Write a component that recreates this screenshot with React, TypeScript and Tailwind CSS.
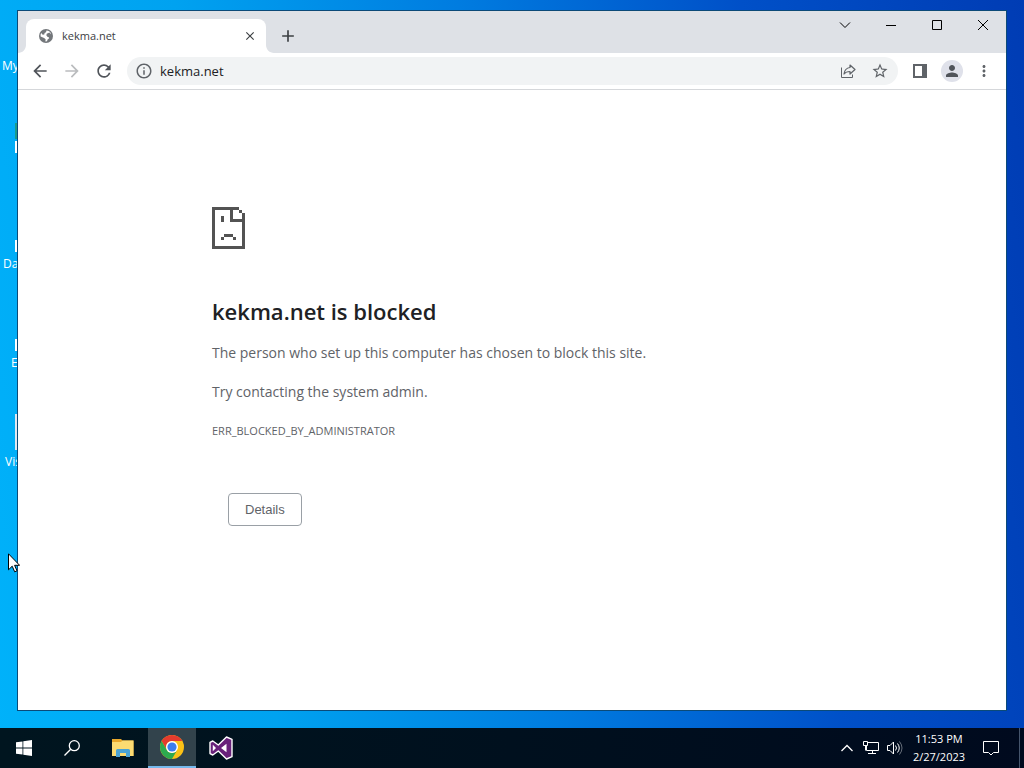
import type { ReactNode } from 'react';
import {
  MdAdd,
  MdArrowBack,
  MdArrowForward,
  MdClose,
  MdInfoOutline,
  MdMoreVert,
  MdPerson,
  MdRefresh,
  MdStarBorder,
} from 'react-icons/md';

const shortcuts = [
  { label: 'My', place: 'top-[57px] left-0.5' },
  { label: 'Da', place: 'top-[255px] left-[3px]' },
  { label: 'E', place: 'top-[354px] left-[11px]' },
  { label: 'Vis', place: 'top-[453px] left-[5px]' },
];

const shortcutEdges = [
  'top-[123px] h-4 bg-[#1a9b8a]',
  'top-[141px] h-3 bg-white',
  'top-[240px] h-3 bg-white',
  'top-[339px] h-3 bg-white',
  'top-[414px] h-9 bg-slate-200',
];

function IconButton({ label, className = '', children }: { label: string; className?: string; children: ReactNode }) {
  return (
    <button type="button" aria-label={label} className={`flex shrink-0 items-center justify-center ${className}`}>
      {children}
    </button>
  );
}

function TitleBar() {
  return (
    <div className="flex h-[42px] items-end bg-[#dee1e6] pl-2">
      <div className="relative flex h-[34px] w-60 items-center rounded-t-lg bg-white pl-3 pr-2 text-[#3c4043]">
        <svg className="absolute bottom-0 -left-2 h-2 w-2" viewBox="0 0 8 8" fill="white">
          <path d="M8 0v8H0c4.400 0 8-3.600 8-8z" />
        </svg>
        <svg className="absolute bottom-0 -right-2 h-2 w-2" viewBox="0 0 8 8" fill="white">
          <path d="M0 0v8h8c-4.400 0-8-3.600-8-8z" />
        </svg>
        <svg className="h-4 w-4" viewBox="0 0 16 16">
          <circle cx="8" cy="8" r="7" fill="#73777b" />
          <path d="M8.500 2.600c1.800 0 3.500 1.100 4.300 2.700l-.8 1.500-2 .2-.8 1.200 1.600.6.400 1.500-1.600 1.200-.6 1.800-1.600.3.200-2.300-1.500-1.300-3.500-1.600c-.2-1.200 0-2.300.600-3.300l1.500 1.700 1.600-.3.300-1.400 1.400-.8z" fill="white" />
          <path d="M8.700 5.800l2.800-1.300 1.500 2.300-.8 3-2.300-.9-1.500-1.300z" fill="#73777b" />
        </svg>
        <span className="ml-2 flex-1 truncate text-[11px]">kekma.net</span>
        <IconButton label="Close tab" className="h-4 w-4">
          <MdClose className="h-[14px] w-[14px]" />
        </IconButton>
      </div>
      <IconButton label="New tab" className="mb-[3px] ml-2 h-7 w-7 text-[#3c4043]">
        <MdAdd className="h-5 w-5" />
      </IconButton>
      <div className="ml-auto flex h-full items-start">
        <IconButton label="Search tabs" className="h-7 w-[46px]">
          <svg className="h-3 w-3" viewBox="0 0 12 12" fill="none" stroke="black">
            <path d="M1 3.500l5 5 5-5" />
          </svg>
        </IconButton>
        <IconButton label="Minimize" className="h-7 w-[46px]">
          <svg className="h-3 w-3" viewBox="0 0 12 12" fill="none" stroke="black">
            <path d="M1 6.500h10" />
          </svg>
        </IconButton>
        <IconButton label="Maximize" className="h-7 w-[46px]">
          <svg className="h-3 w-3" viewBox="0 0 12 12" fill="none" stroke="black">
            <path d="M1.500 1.500h9v9h-9z" />
          </svg>
        </IconButton>
        <IconButton label="Close" className="h-7 w-[46px]">
          <svg className="h-3 w-3" viewBox="0 0 12 12" fill="none" stroke="black">
            <path d="M1 1l10 10M11 1L1 11" />
          </svg>
        </IconButton>
      </div>
    </div>
  );
}

function Toolbar() {
  return (
    <div className="flex h-[37px] items-center border-b border-[#d5d7da] bg-white px-1.5 text-[#5f6368]">
      <IconButton label="Back" className="h-8 w-8 text-[#50545a]">
        <MdArrowBack className="h-5 w-5" />
      </IconButton>
      <IconButton label="Forward" className="h-8 w-8 text-[#babcbe]">
        <MdArrowForward className="h-5 w-5" />
      </IconButton>
      <IconButton label="Reload" className="h-8 w-8 text-[#50545a]">
        <MdRefresh className="h-5 w-5" />
      </IconButton>
      <div className="ml-[7px] flex h-7 flex-1 items-center rounded-full bg-[#f1f3f4] pl-2 pr-0.5">
        <IconButton label="View site information" className="h-[18px] w-[18px]">
          <MdInfoOutline className="h-[18px] w-[18px]" />
        </IconButton>
        <input
          aria-label="Address"
          defaultValue="kekma.net"
          className="ml-[7px] min-w-0 flex-1 bg-transparent pt-0.5 text-[13px] text-[#202124] outline-none"
        />
        <IconButton label="Share this page" className="h-7 w-8">
          <svg className="h-4 w-4" viewBox="0 0 16 16" fill="none" stroke="currentColor">
            <path d="M1.500 4.500v10h11v-3" />
            <path
              d="M10 2l5 4.500-5 4.500V8.500c-3 0-4.700.8-6 2.500.4-3.300 2.200-6 6-6.500z"
              strokeWidth="1.200"
              strokeLinejoin="round"
            />
          </svg>
        </IconButton>
        <IconButton label="Bookmark this tab" className="h-7 w-8">
          <MdStarBorder className="h-[18px] w-[18px]" />
        </IconButton>
      </div>
      <IconButton label="Side panel" className="ml-1.5 h-8 w-8">
        <svg className="h-4 w-4" viewBox="0 0 16 16" fill="currentColor">
          <path d="M1 1h14v14H1zM3 3v10h7V3z" fillRule="evenodd" />
        </svg>
      </IconButton>
      <IconButton label="Profile" className="h-8 w-8">
        <span className="flex h-[22px] w-[22px] items-center justify-center rounded-full bg-[#dfe1ea]">
          <MdPerson className="h-[18px] w-[18px] text-[#50545a]" />
        </span>
      </IconButton>
      <IconButton label="Menu" className="h-8 w-8">
        <MdMoreVert className="h-[18px] w-[18px]" />
      </IconButton>
    </div>
  );
}

function BlockedPage() {
  return (
    <main className="mx-auto w-full max-w-[600px] pt-[117px] text-[14px] leading-5 text-[#5f6368]">
      <svg className="h-[42px] w-[33px]" viewBox="0 0 11 14" fill="#535353" shapeRendering="crispEdges">
        <path d="M0 0h9v1H7v3h3v1H6V1H1v12h9V2h1v12H0z" />
        <path d="M9 1h1v1H9zM3 3h1v2H3zM4 9h3v1H4zM3 10h1v1H3zM7 10h1v1H7z" />
      </svg>
      <h1 className="mt-[46px] text-[22px] font-semibold leading-8 text-[#202124]">kekma.net is blocked</h1>
      <p className="mt-4">The person who set up this computer has chosen to block this site.</p>
      <p className="mt-[19px]">Try contacting the system admin.</p>
      <p className="mt-[19px] text-[11px] leading-5">ERR_BLOCKED_BY_ADMINISTRATOR</p>
      <button
        type="button"
        className="mt-[52px] ml-4 h-[33px] rounded border border-[#9aa0a6] px-4 font-['Liberation_Sans',sans-serif] text-[13px]"
      >
        Details
      </button>
    </main>
  );
}

function Taskbar() {
  return (
    <footer className="flex h-10 items-stretch bg-linear-to-r from-[#00151f] via-[#00101e] to-[#000a1e] text-white">
      <IconButton label="Start" className="w-12">
        <svg className="h-4 w-4" viewBox="0 0 16 16" fill="white">
          <path d="M0 2.300l6.500-.900v6.200H0zM7.300 1.300L16 0v7.600H7.300zM0 8.400h6.500v6.200L0 13.700zM7.300 8.400H16V16l-8.700-1.300z" />
        </svg>
      </IconButton>
      <IconButton label="Search" className="w-12">
        <svg className="h-4 w-4" viewBox="0 0 16 16" fill="none" stroke="white" strokeWidth="1.300">
          <circle cx="10.300" cy="5.700" r="5" />
          <path d="M6.700 9.300L.5 15.500" />
        </svg>
      </IconButton>
      <IconButton label="File Explorer" className="ml-1 w-[46px]">
        <svg className="h-6 w-6" viewBox="0 0 24 24">
          <path d="M1 3h9l1.500 1.500H22.500V20H1z" fill="#e9a82c" />
          <path d="M1 6h9l1.500-1.500h11V20H1z" fill="#fcdb72" />
          <path d="M5 21v-6.500a1.500 1.500 0 011.500-1.500h11a1.500 1.500 0 011.500 1.500V21h-4v-4H9v4z" fill="#4ba3d4" />
        </svg>
      </IconButton>
      <IconButton label="Google Chrome" className="ml-0.5 w-12 border-b-2 border-[#76b9ed] bg-[#32434c]">
        <svg className="h-6 w-6" viewBox="0 0 24 24">
          <circle cx="12" cy="12" r="12" fill="#fbc116" />
          <path d="M1.608 6A12 12 0 0122.392 6H12a6 6 0 00-5.196 9z" fill="#e33b2e" />
          <path d="M1.608 6A12 12 0 0012 24l5.196-9a6 6 0 01-10.392 0z" fill="#2da94f" />
          <circle cx="12" cy="12" r="6" fill="white" />
          <circle cx="12" cy="12" r="4.600" fill="#3b7ded" />
        </svg>
      </IconButton>
      <IconButton label="Visual Studio" className="w-[50px]">
        <svg className="h-6 w-6" viewBox="0 0 24 24">
          <path
            d="M17.500 1L23 3.300v17.400L17.500 23l-8.200-8L3.800 19 1 17.600V6.400L3.800 5l5.500 4z"
            fill="#68217a"
            stroke="white"
            strokeWidth="1.400"
            strokeLinejoin="round"
          />
          <path d="M3.800 8.700v6.600L7 12zM17.500 7.800L12 12l5.500 4.200z" fill="white" />
        </svg>
      </IconButton>
      <div className="ml-auto flex items-center">
        <IconButton label="Show hidden icons" className="h-10 w-6">
          <svg className="h-3 w-3" viewBox="0 0 12 12" fill="none" stroke="white" strokeWidth="1.300">
            <path d="M.5 9L6 3.500 11.500 9" />
          </svg>
        </IconButton>
        <IconButton label="Network" className="h-10 w-6">
          <svg className="h-4 w-4" viewBox="0 0 16 16" fill="none" stroke="white">
            <path d="M5 2.500h10.500v8H3.500V6M9.500 10.500v3M5 13.500h8" />
            <path d="M.5 1.500h4v4h-4zM2.500 5.500v5" />
          </svg>
        </IconButton>
        <IconButton label="Volume" className="h-10 w-6">
          <svg className="h-4 w-4" viewBox="0 0 16 16" fill="none" stroke="white">
            <path d="M.5 5.500H3L6.500 2v12L3 10.500H.5zM8.500 5.500q2 2.500 0 5M10.500 3.500q3.500 4.500 0 9" />
            <path d="M12.500 1.500q5 6.500 0 13" opacity=".4" />
          </svg>
        </IconButton>
        <button type="button" className="mr-0.5 flex h-10 w-16 flex-col items-center justify-center text-[11px] leading-[18px]">
          <span>11:53 PM</span>
          <span>2/27/2023</span>
        </button>
        <IconButton label="Notifications" className="h-10 w-9">
          <svg className="h-4 w-4" viewBox="0 0 16 16" fill="none" stroke="white">
            <path d="M.5 1.500h15v11h-5L8 15l-2.500-2.500h-5z" />
          </svg>
        </IconButton>
        <button type="button" aria-label="Show desktop" className="ml-2.5 h-10 w-[5px] border-l border-slate-600" />
      </div>
    </footer>
  );
}

function Cursor() {
  return (
    <svg className="absolute left-2 top-[553px] h-5 w-3" viewBox="0 0 12 20">
      <path d="M.5.800v16l3.700-3.600 2.500 5.600 2.300-1-2.400-5.500h5z" fill="white" stroke="black" />
    </svg>
  );
}

export default function App() {
  return (
    <div className="relative flex min-h-screen flex-col bg-[linear-gradient(82deg,#00b2fa_0%,#00a2f0_25%,#007ce0_50%,#0050c8_75%,#003cb4_100%)] font-['Open_Sans','Noto_Sans',sans-serif]">
      {/* Desktop shortcuts, mostly behind the browser window */}
      {shortcuts.map((item) => (
        <span key={item.label} className={`absolute text-[12px] leading-[18px] text-white ${item.place}`}>
          {item.label}
        </span>
      ))}
      {shortcutEdges.map((edge) => (
        <span key={edge} className={`absolute left-[15px] w-0.5 ${edge}`} />
      ))}
      <div className="flex flex-1 flex-col px-[17px] pt-2.5 pb-[17px]">
        <section className="relative flex flex-1 flex-col border border-[#0b4a78] bg-white">
          <TitleBar />
          <Toolbar />
          <BlockedPage />
        </section>
      </div>
      <Taskbar />
      <Cursor />
    </div>
  );
}
